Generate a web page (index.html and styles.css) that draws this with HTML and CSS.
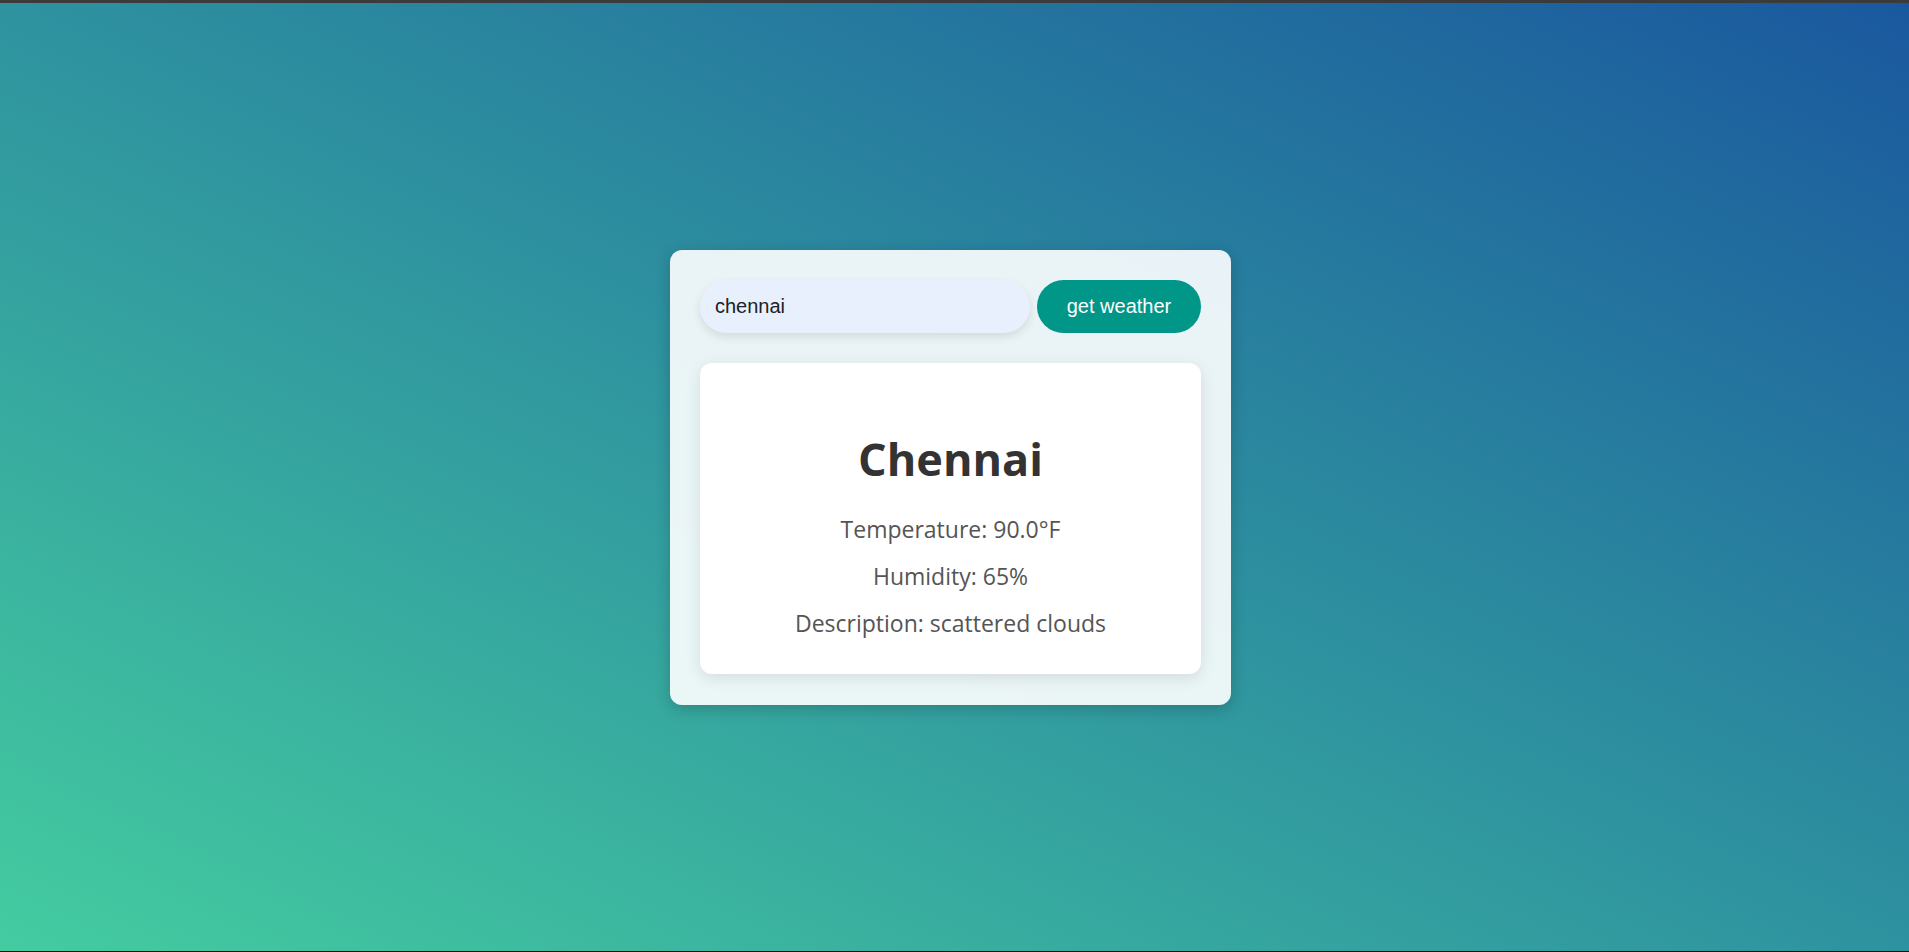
FILE: index.html
```html
<!DOCTYPE html>
<html lang="en">
<head>
<meta charset="utf-8">
<title>Weather App</title>
<link rel="stylesheet" href="styles.css">
</head>
<body>
  <main class="container">
    <div class="search">
      <input class="search-input" type="text" value="chennai">
      <button class="search-btn" type="button">get weather</button>
    </div>
    <section class="weather">
      <h2 class="city">Chennai</h2>
      <p class="info">Temperature: 90.0°F</p>
      <p class="info">Humidity: 65%</p>
      <p class="info">Description: scattered clouds</p>
    </section>
  </main>
</body>
</html>
```

FILE: styles.css
```css
html, body {
  margin: 0;
  padding: 0;
}

body {
  box-sizing: border-box;
  height: 100vh;
  border-top: 3px solid #3b3b3b;
  border-bottom: 1px solid #0a0a0a;
  background: linear-gradient(to top right, #44cca0 0%, #2e929f 50%, #1a589e 100%);
  display: flex;
  align-items: center;
  justify-content: center;
  padding-right: 8px;
  font-family: "Open Sans", "Noto Sans", sans-serif;
}

.container {
  width: 501px;
  padding: 30px 30px 31px;
  background: rgba(255, 255, 255, 0.9);
  border-radius: 12px;
  box-shadow: 0 4px 16px rgba(0, 0, 0, 0.2);
}

.search {
  display: flex;
  gap: 7px;
  margin-bottom: 30px;
}

.search-input {
  flex: 1;
  min-width: 0;
  height: 53px;
  box-sizing: border-box;
  padding: 0 15px;
  border: none;
  outline: none;
  border-radius: 27px;
  background: #e8f0fe;
  color: #202124;
  font-family: "Liberation Sans", Arial, sans-serif;
  font-size: 20px;
  box-shadow: 0 4px 10px rgba(0, 0, 0, 0.1);
}

.search-btn {
  width: 164px;
  height: 53px;
  padding: 0;
  border: none;
  border-radius: 27px;
  background: #009688;
  color: #ffffff;
  font-family: "Liberation Sans", Arial, sans-serif;
  font-size: 20px;
  cursor: pointer;
}

.weather {
  background: #ffffff;
  border-radius: 12px;
  padding: 38px 20px 37px;
  text-align: center;
  box-shadow: 0 4px 16px rgba(0, 0, 0, 0.1);
}

.city {
  margin: 31px 0 29px;
  font-size: 45px;
  line-height: 54px;
  font-weight: 700;
  color: #333333;
}

.info {
  margin: 0 0 19px;
  font-size: 23px;
  line-height: 28px;
  color: #555555;
}

.info:last-child {
  margin-bottom: 0;
}
```
